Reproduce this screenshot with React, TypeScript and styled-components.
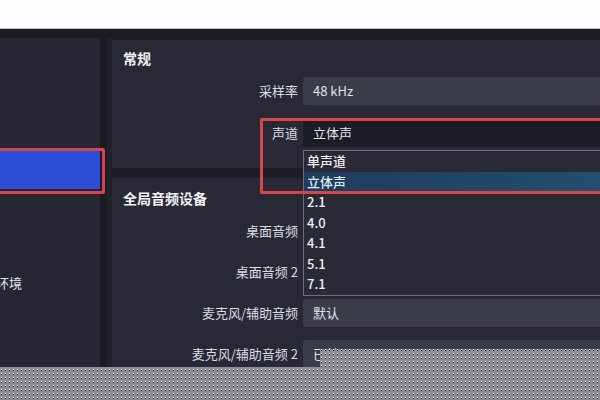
import { Fragment } from 'react';
import styled, { createGlobalStyle } from 'styled-components';

const GlobalStyle = createGlobalStyle`
  html, body {
    margin: 0;
    padding: 0;
    background: #fff;
  }
  body {
    font-family: "Noto Sans CJK SC", "Noto Sans", "Liberation Sans", sans-serif;
  }
`;

const Screen = styled.div`
  position: relative;
  width: 600px;
  height: 400px;
  overflow: hidden;
  display: flex;
  flex-direction: column;
  background: #fdfdfd;
`;

const TopBand = styled.div`
  height: 28px;
  flex: none;
  background: #fdfdfd;
  border-bottom: 1px solid #b9b9c2;
`;

const Window = styled.div`
  flex: 1;
  min-height: 0;
  display: flex;
  flex-direction: column;
  background: #1c1d26;
`;

const TitleStrip = styled.div`
  height: 9px;
  flex: none;
  background: #1a1b23;
`;

const Body = styled.div`
  flex: 1;
  min-height: 0;
  display: flex;
`;

const Sidebar = styled.ul`
  width: 100px;
  flex: none;
  margin: 0;
  padding: 0;
  list-style: none;
  background: #262733;
  overflow: hidden;
`;

const SideItem = styled.li<{ $selected?: boolean }>`
  height: 37.7px;
  display: flex;
  align-items: center;
  white-space: nowrap;
  font-size: 13px;
  color: #e4e4ea;
  background: ${(p) => (p.$selected ? '#2c4dd5' : 'transparent')};
`;

const SideLabel = styled.span`
  margin-left: -4px;
`;

const Splitter = styled.div`
  width: 7px;
  flex: none;
  background: #1a1b23;
  border-right: 5px solid #20212a;
`;

const Content = styled.div`
  flex: 1;
  min-width: 0;
  display: flex;
  flex-direction: column;
  gap: 10px;
  padding-top: 2px;
`;

const Group = styled.section<{ $top: number; $bottom: number }>`
  background: #282935;
  padding: ${(p) => p.$top}px 0 ${(p) => p.$bottom}px;
`;

const GroupTitle = styled.h3`
  margin: 0 0 0 11px;
  font-size: 14px;
  font-weight: 700;
  line-height: 16px;
  color: #f2f2f6;
`;

const Rows = styled.div<{ $gap: number }>`
  display: grid;
  grid-template-columns: 186px 1fr;
  column-gap: 5px;
  row-gap: ${(p) => p.$gap}px;
  margin-top: 11px;
`;

const Label = styled.div`
  text-align: right;
  font-size: 13px;
  line-height: 28px;
  color: #dcdce3;
  white-space: nowrap;
`;

const Field = styled.div<{ $open?: boolean }>`
  height: 28px;
  margin-right: -8px;
  padding-left: 10px;
  border-radius: 3px;
  font-size: 13px;
  line-height: 28px;
  color: #e2e2e8;
  background: ${(p) => (p.$open ? '#1b1c26' : '#3a3c48')};
`;

const Dropdown = styled.ul`
  position: absolute;
  top: 150px;
  left: 303px;
  width: 320px;
  margin: 0;
  padding: 0;
  list-style: none;
  background: #292a35;
  border: 1px solid #6c6e7a;
`;

const Option = styled.li<{ $active?: boolean }>`
  height: 20.5px;
  padding-left: 3px;
  font-size: 13px;
  line-height: 20.5px;
  font-weight: 500;
  color: ${(p) => (p.$active ? '#d8eef0' : '#eeeef3')};
  background: ${(p) => (p.$active ? 'linear-gradient(90deg, #203b5c, #24506f)' : 'transparent')};
`;

const Highlight = styled.div<{ $x: number; $y: number; $w: number; $h: number }>`
  position: absolute;
  left: ${(p) => p.$x}px;
  top: ${(p) => p.$y}px;
  width: ${(p) => p.$w}px;
  height: ${(p) => p.$h}px;
  box-sizing: border-box;
  border: 3px solid #d8444d;
  border-radius: 2px;
  pointer-events: none;
`;

const Dither = styled.div`
  position: absolute;
  left: 0;
  right: 0;
  top: 349px;
  bottom: 0;
  background-color: #8e8e9a;
  background-image:
    radial-gradient(circle at 1.5px 0.5px, #f6f6fa 0.75px, transparent 0.95px),
    radial-gradient(circle at 1.5px 1.5px, #16161d 0.75px, transparent 0.95px);
  background-size: 4px 4px;
  clip-path: polygon(0 18px, 320px 18px, 320px 0, 100% 0, 100% 100%, 0 100%);
`;

// only the tail of one sidebar label is on screen in the shot
const sideItems = [
  { key: 'general', label: '' },
  { key: 'stream', label: '' },
  { key: 'output', label: '' },
  { key: 'audio', label: '', selected: true },
  { key: 'video', label: '' },
  { key: 'hotkeys', label: '' },
  { key: 'access', label: '环境' },
  { key: 'advanced', label: '' },
];
const channels = ['单声道', '立体声', '2.1', '4.0', '4.1', '5.1', '7.1'];
const devices = [
  { label: '桌面音频', value: '' },
  { label: '桌面音频 2', value: '' },
  { label: '麦克风/辅助音频', value: '默认' },
  { label: '麦克风/辅助音频 2', value: '已禁用' },
];

export default function App() {
  return (
    <>
      <GlobalStyle />
      <Screen>
        <TopBand />
        <Window>
          <TitleStrip />
          <Body>
            <Sidebar>
              {sideItems.map((item) => (
                <SideItem key={item.key} $selected={item.selected}>
                  {item.label && <SideLabel>{item.label}</SideLabel>}
                </SideItem>
              ))}
            </Sidebar>
            <Splitter />
            <Content>
              <Group $top={10} $bottom={21}>
                <GroupTitle>常规</GroupTitle>
                <Rows $gap={14}>
                  <Label>采样率</Label>
                  <Field>48 kHz</Field>
                  <Label>声道</Label>
                  <Field $open>立体声</Field>
                </Rows>
              </Group>
              <Group $top={12} $bottom={20}>
                <GroupTitle>全局音频设备</GroupTitle>
                <Rows $gap={13}>
                  {devices.map((d) => (
                    <Fragment key={d.label}>
                      <Label>{d.label}</Label>
                      <Field>{d.value}</Field>
                    </Fragment>
                  ))}
                </Rows>
              </Group>
            </Content>
          </Body>
        </Window>
        <Dropdown>
          {channels.map((c) => (
            <Option key={c} $active={c === '立体声'}>
              {c}
            </Option>
          ))}
        </Dropdown>
        <Highlight $x={-3} $y={148} $w={108} $h={46} />
        <Highlight $x={260} $y={118} $w={350} $h={76} />
        <Dither />
      </Screen>
    </>
  );
}
